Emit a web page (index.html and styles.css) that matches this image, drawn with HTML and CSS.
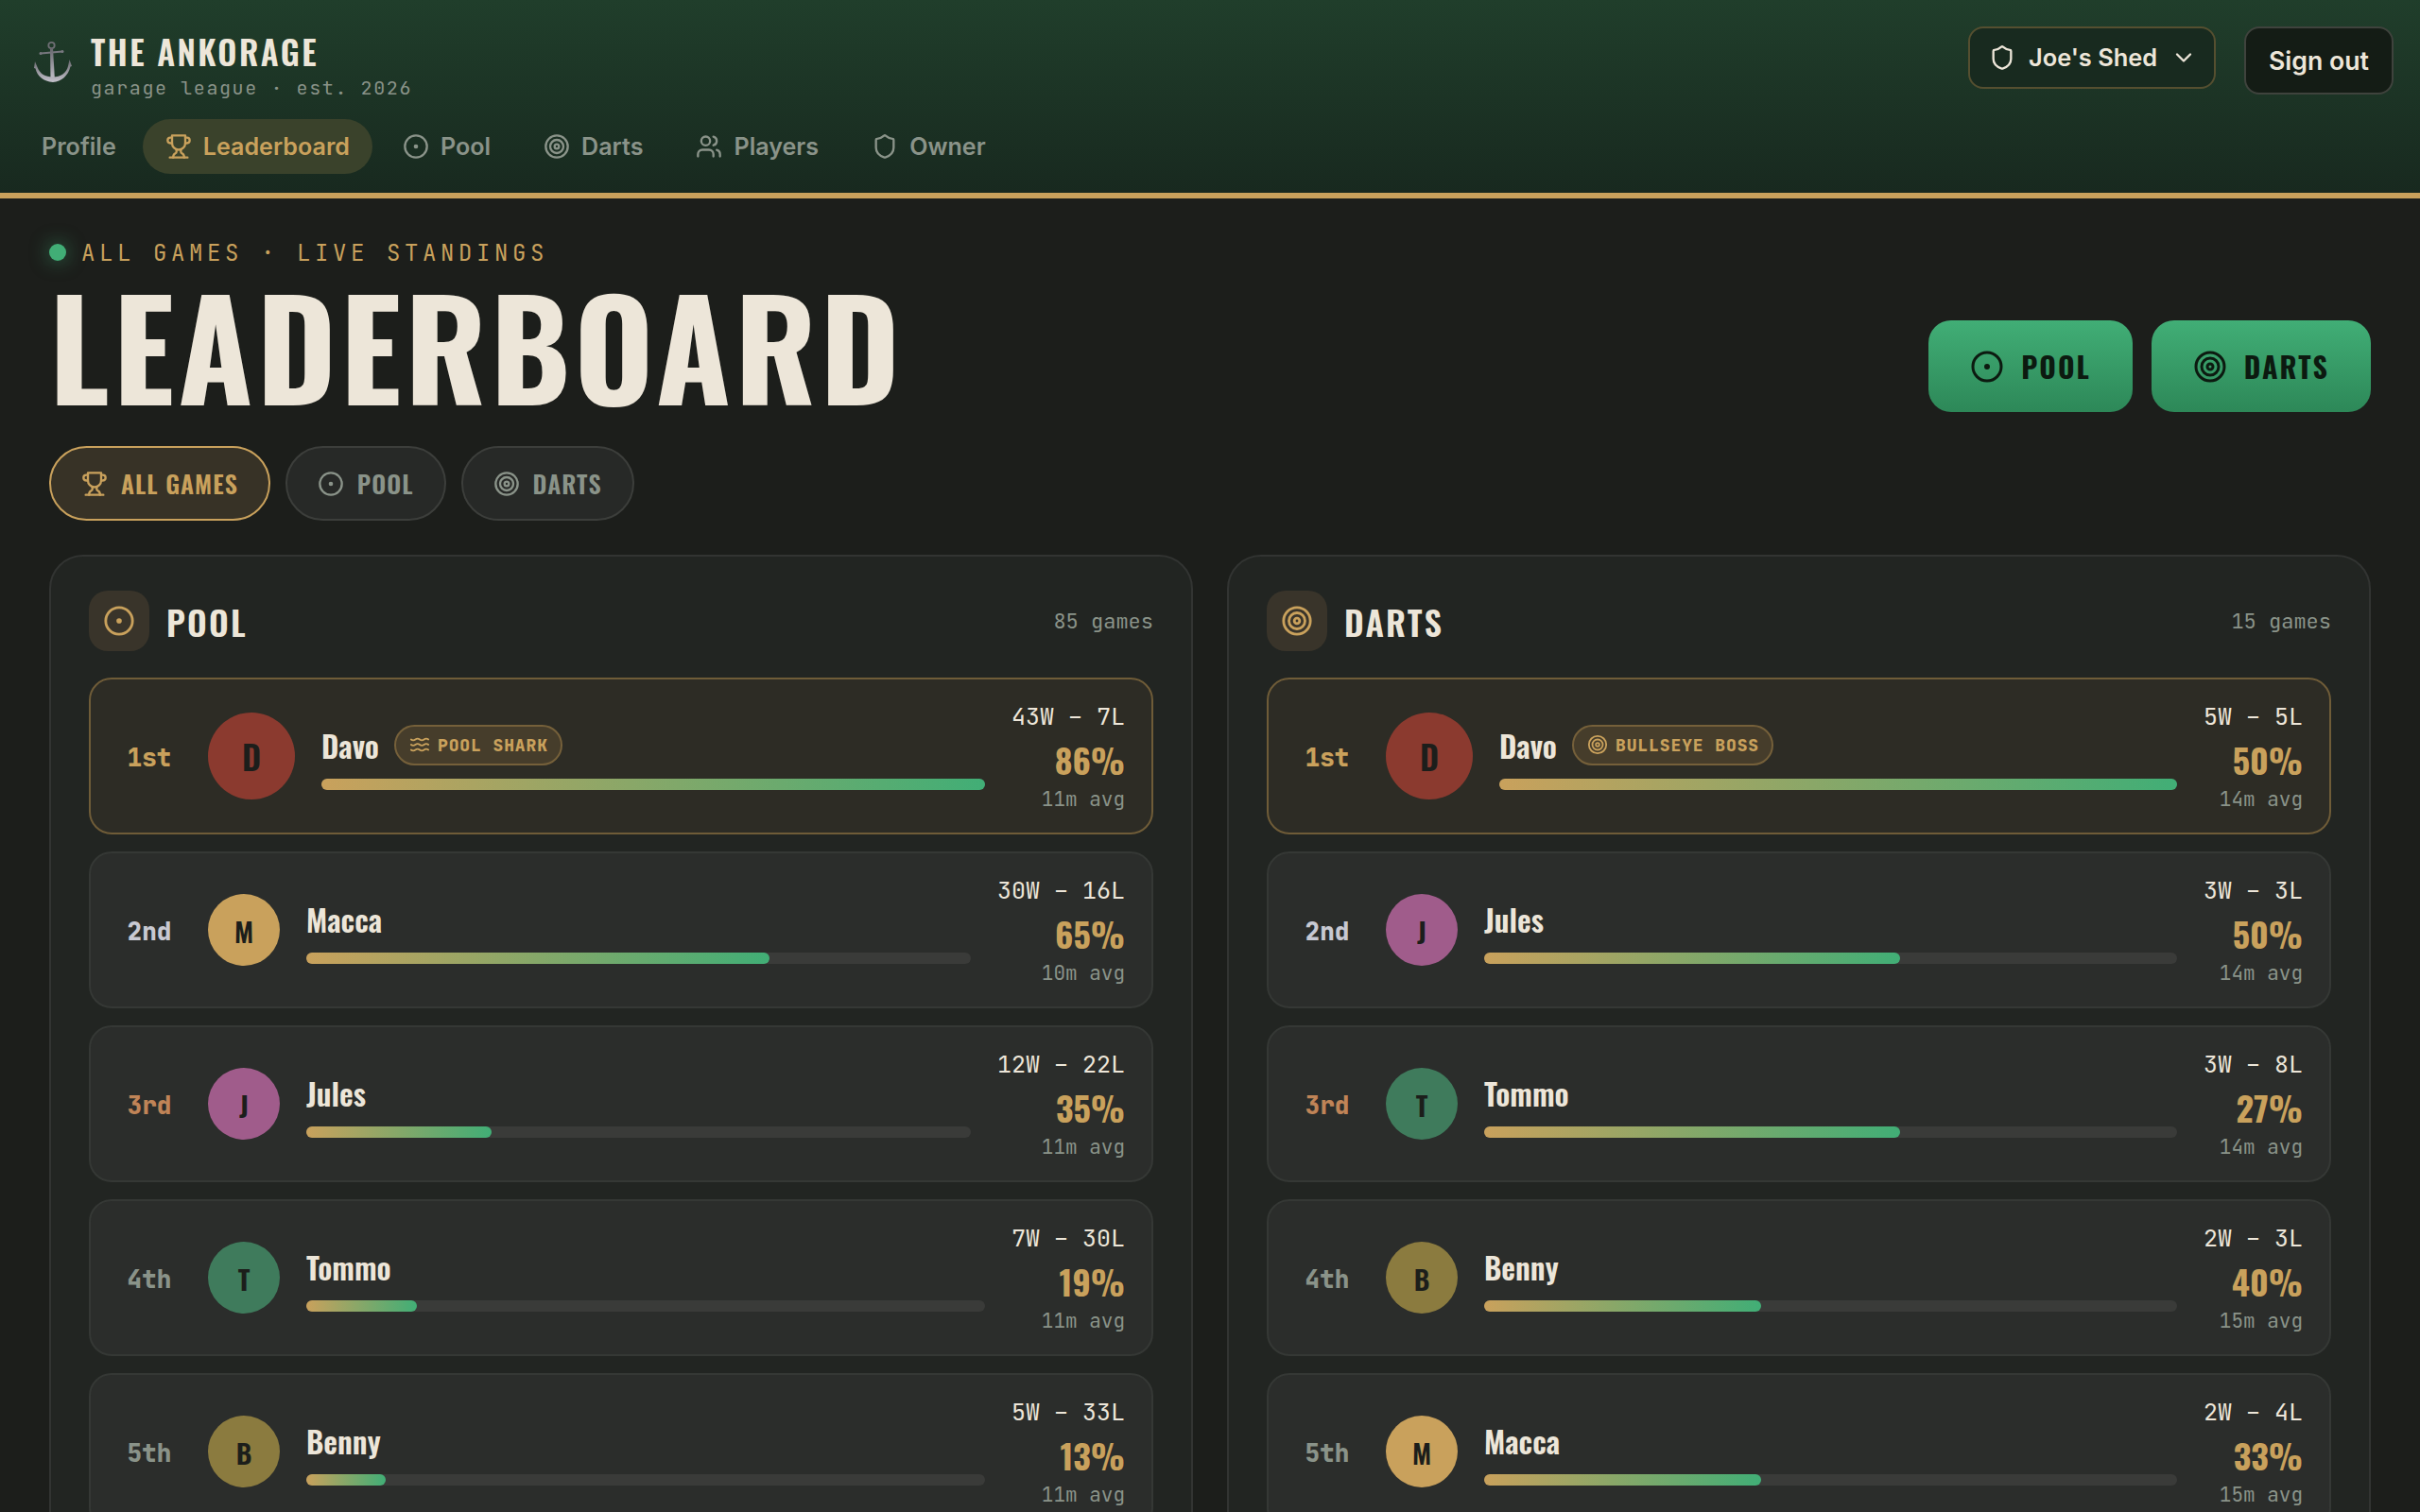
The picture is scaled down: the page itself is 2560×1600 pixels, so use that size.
FILE: index.html
```html
<!DOCTYPE html>
<html lang="en">
<head>
    <meta charset="UTF-8">
    <meta name="viewport" content="width=device-width, initial-scale=1.0">
    <title>The Ankorage - Leaderboard</title>
    <link rel="stylesheet" href="styles.css">
</head>
<body>

<!-- Icon sprite -->
<svg class="sprite">
    <symbol id="trophy" viewBox="0 0 24 24">
        <path d="M6 9H4.5a2.5 2.5 0 0 1 0-5H6"/>
        <path d="M18 9h1.5a2.5 2.5 0 0 0 0-5H18"/>
        <path d="M4 22h16"/>
        <path d="M10 14.66V17c0 .55-.47.98-.97 1.21C7.85 18.75 7 20.24 7 22"/>
        <path d="M14 14.66V17c0 .55.47.98.97 1.21C16.15 18.75 17 20.24 17 22"/>
        <path d="M18 2H6v7a6 6 0 0 0 12 0V2Z"/>
    </symbol>
    <symbol id="pool" viewBox="0 0 24 24">
        <circle cx="12" cy="12" r="10"/>
        <circle cx="12" cy="12" r="1"/>
    </symbol>
    <symbol id="darts" viewBox="0 0 24 24">
        <circle cx="12" cy="12" r="10"/>
        <circle cx="12" cy="12" r="6"/>
        <circle cx="12" cy="12" r="2"/>
    </symbol>
    <symbol id="users" viewBox="0 0 24 24">
        <path d="M16 21v-2a4 4 0 0 0-4-4H6a4 4 0 0 0-4 4v2"/>
        <circle cx="9" cy="7" r="4"/>
        <path d="M22 21v-2a4 4 0 0 0-3-3.87"/>
        <path d="M16 3.13a4 4 0 0 1 0 7.75"/>
    </symbol>
    <symbol id="shield" viewBox="0 0 24 24">
        <path d="M20 13c0 5-3.5 7.5-7.66 8.95a1 1 0 0 1-.67-.01C7.5 20.5 4 18 4 13V6a1 1 0 0 1 1-1c2 0 4.5-1.2 6.24-2.72a1.17 1.17 0 0 1 1.52 0C14.51 3.81 17 5 19 5a1 1 0 0 1 1 1z"/>
    </symbol>
    <symbol id="chevron" viewBox="0 0 24 24">
        <path d="m6 9 6 6 6-6"/>
    </symbol>
    <symbol id="waves" viewBox="0 0 24 24">
        <path d="M2 6c.6.5 1.2 1 2.5 1C7 7 7 5 9.5 5c2.6 0 2.4 2 5 2 2.5 0 2.5-2 5-2 1.3 0 1.9.5 2.5 1"/>
        <path d="M2 12c.6.5 1.2 1 2.5 1 2.5 0 2.5-2 5-2 2.6 0 2.4 2 5 2 2.5 0 2.5-2 5-2 1.3 0 1.9.5 2.5 1"/>
        <path d="M2 18c.6.5 1.2 1 2.5 1 2.5 0 2.5-2 5-2 2.6 0 2.4 2 5 2 2.5 0 2.5-2 5-2 1.3 0 1.9.5 2.5 1"/>
    </symbol>
</svg>

<header class="header">
    <div class="topbar">
        <div class="brand">
            <svg class="anchor" viewBox="0 0 42 46">
                <defs>
                    <linearGradient id="steel" x1="0" y1="0" x2="0" y2="1">
                        <stop offset="0" stop-color="#66666c"/>
                        <stop offset="1" stop-color="#c4c2cb"/>
                    </linearGradient>
                </defs>
                <circle cx="19.5" cy="5" r="3.2" fill="none" stroke="#6f6f75" stroke-width="1.8"/>
                <path d="M8 13.5 L31 11.5" stroke="#77777e" stroke-width="2" stroke-linecap="round"/>
                <circle cx="8" cy="13.5" r="1.5" fill="#77777e"/>
                <circle cx="31" cy="11.5" r="1.5" fill="#77777e"/>
                <path d="M18 8 L21 8 L23 42 L18.5 42 Z" fill="url(#steel)"/>
                <path d="M2 22 L4.5 28 C7 35 13 38.5 21 38.5 C29 38.5 35.5 34 37 27 L38.5 20 L41 27 L39.5 27.5 C37 37.5 30 43 21 44 C11 43 4.5 38 2.5 29.5 L1 29 Z" fill="url(#steel)"/>
            </svg>
            <div class="brand-text">
                <div class="brand-name cond">THE ANKORAGE</div>
                <div class="brand-sub">garage league · est. 2026</div>
            </div>
        </div>
        <div class="account">
            <button class="org"><svg class="icon"><use href="#shield"/></svg><span>Joe's Shed</span><svg class="icon chevron"><use href="#chevron"/></svg></button>
            <button class="signout">Sign out</button>
        </div>
    </div>
    <nav class="nav">
        <a class="nav-item plain">Profile</a>
        <a class="nav-item active"><svg class="icon"><use href="#trophy"/></svg>Leaderboard</a>
        <a class="nav-item"><svg class="icon"><use href="#pool"/></svg>Pool</a>
        <a class="nav-item"><svg class="icon"><use href="#darts"/></svg>Darts</a>
        <a class="nav-item"><svg class="icon"><use href="#users"/></svg>Players</a>
        <a class="nav-item"><svg class="icon"><use href="#shield"/></svg>Owner</a>
    </nav>
</header>

<main class="main">
    <div class="hero">
        <div>
            <div class="eyebrow"><span class="dot"></span>ALL GAMES · LIVE STANDINGS</div>
            <h1 class="title cond">LEADERBOARD</h1>
        </div>
        <div class="actions">
            <button class="action"><svg class="icon"><use href="#pool"/></svg><span class="cond">POOL</span></button>
            <button class="action"><svg class="icon"><use href="#darts"/></svg><span class="cond">DARTS</span></button>
        </div>
    </div>

    <div class="tabs">
        <button class="tab active"><svg class="icon"><use href="#trophy"/></svg><span class="cond">ALL GAMES</span></button>
        <button class="tab"><svg class="icon"><use href="#pool"/></svg><span class="cond">POOL</span></button>
        <button class="tab"><svg class="icon"><use href="#darts"/></svg><span class="cond">DARTS</span></button>
    </div>

    <div class="boards">
        <section class="board">
            <div class="board-head">
                <span class="board-icon"><svg class="icon"><use href="#pool"/></svg></span>
                <h2 class="board-title cond">POOL</h2>
                <span class="board-count">85 games</span>
            </div>
            <div class="row first">
                <div class="rank">1st</div>
                <div class="avatar red"><span class="cond">D</span></div>
                <div class="player">
                    <div class="name-line"><span class="name cond">Davo</span><span class="badge"><svg class="icon"><use href="#waves"/></svg>POOL SHARK</span></div>
                    <div class="bar"><div class="fill" style="width: 100%"></div></div>
                </div>
                <div class="stats"><div class="record">43W – 7L</div><div class="pct cond">86%</div><div class="avg">11m avg</div></div>
            </div>
            <div class="row second">
                <div class="rank">2nd</div>
                <div class="avatar gold"><span class="cond">M</span></div>
                <div class="player">
                    <div class="name-line"><span class="name cond">Macca</span></div>
                    <div class="bar"><div class="fill" style="width: 69.77%"></div></div>
                </div>
                <div class="stats"><div class="record">30W – 16L</div><div class="pct cond">65%</div><div class="avg">10m avg</div></div>
            </div>
            <div class="row third">
                <div class="rank">3rd</div>
                <div class="avatar purple"><span class="cond">J</span></div>
                <div class="player">
                    <div class="name-line"><span class="name cond">Jules</span></div>
                    <div class="bar"><div class="fill" style="width: 27.91%"></div></div>
                </div>
                <div class="stats"><div class="record">12W – 22L</div><div class="pct cond">35%</div><div class="avg">11m avg</div></div>
            </div>
            <div class="row">
                <div class="rank">4th</div>
                <div class="avatar green"><span class="cond">T</span></div>
                <div class="player">
                    <div class="name-line"><span class="name cond">Tommo</span></div>
                    <div class="bar"><div class="fill" style="width: 16.28%"></div></div>
                </div>
                <div class="stats"><div class="record">7W – 30L</div><div class="pct cond">19%</div><div class="avg">11m avg</div></div>
            </div>
            <div class="row">
                <div class="rank">5th</div>
                <div class="avatar olive"><span class="cond">B</span></div>
                <div class="player">
                    <div class="name-line"><span class="name cond">Benny</span></div>
                    <div class="bar"><div class="fill" style="width: 11.63%"></div></div>
                </div>
                <div class="stats"><div class="record">5W – 33L</div><div class="pct cond">13%</div><div class="avg">11m avg</div></div>
            </div>
        </section>

        <section class="board">
            <div class="board-head">
                <span class="board-icon"><svg class="icon"><use href="#darts"/></svg></span>
                <h2 class="board-title cond">DARTS</h2>
                <span class="board-count">15 games</span>
            </div>
            <div class="row first">
                <div class="rank">1st</div>
                <div class="avatar red"><span class="cond">D</span></div>
                <div class="player">
                    <div class="name-line"><span class="name cond">Davo</span><span class="badge"><svg class="icon"><use href="#darts"/></svg>BULLSEYE BOSS</span></div>
                    <div class="bar"><div class="fill" style="width: 100%"></div></div>
                </div>
                <div class="stats"><div class="record">5W – 5L</div><div class="pct cond">50%</div><div class="avg">14m avg</div></div>
            </div>
            <div class="row second">
                <div class="rank">2nd</div>
                <div class="avatar purple"><span class="cond">J</span></div>
                <div class="player">
                    <div class="name-line"><span class="name cond">Jules</span></div>
                    <div class="bar"><div class="fill" style="width: 60%"></div></div>
                </div>
                <div class="stats"><div class="record">3W – 3L</div><div class="pct cond">50%</div><div class="avg">14m avg</div></div>
            </div>
            <div class="row third">
                <div class="rank">3rd</div>
                <div class="avatar green"><span class="cond">T</span></div>
                <div class="player">
                    <div class="name-line"><span class="name cond">Tommo</span></div>
                    <div class="bar"><div class="fill" style="width: 60%"></div></div>
                </div>
                <div class="stats"><div class="record">3W – 8L</div><div class="pct cond">27%</div><div class="avg">14m avg</div></div>
            </div>
            <div class="row">
                <div class="rank">4th</div>
                <div class="avatar olive"><span class="cond">B</span></div>
                <div class="player">
                    <div class="name-line"><span class="name cond">Benny</span></div>
                    <div class="bar"><div class="fill" style="width: 40%"></div></div>
                </div>
                <div class="stats"><div class="record">2W – 3L</div><div class="pct cond">40%</div><div class="avg">15m avg</div></div>
            </div>
            <div class="row">
                <div class="rank">5th</div>
                <div class="avatar gold"><span class="cond">M</span></div>
                <div class="player">
                    <div class="name-line"><span class="name cond">Macca</span></div>
                    <div class="bar"><div class="fill" style="width: 40%"></div></div>
                </div>
                <div class="stats"><div class="record">2W – 4L</div><div class="pct cond">33%</div><div class="avg">15m avg</div></div>
            </div>
        </section>
    </div>
</main>

</body>
</html>
```
FILE: styles.css
```css
:root {
    --bg: #1c1e1b;
    --cream: #ede6d9;
    --muted: #8a9389;
    --gold: #c9a15c;
    --green: #41ae76;
    --mono: "JetBrains Mono", "DejaVu Sans Mono", monospace;
    --sans: Inter, sans-serif;
    --display: Oswald, "Liberation Sans Narrow", sans-serif;
}
* {
    box-sizing: border-box;
}
body {
    margin: 0;
    height: 1600px;
    overflow: hidden;
    background: var(--bg);
    color: var(--cream);
    font-family: var(--sans);
}
button {
    font-family: inherit;
    color: inherit;
    border: none;
    white-space: nowrap;
}
.sprite {
    display: none;
}
.icon {
    width: 28px;
    height: 28px;
    flex: none;
    fill: none;
    stroke: currentColor;
    stroke-width: 2;
    stroke-linecap: round;
    stroke-linejoin: round;
}
.cond {
    font-family: var(--display);
    font-weight: 600;
}

/* Header */
.header {
    height: 210px;
    padding: 28px 28px 0 20px;
    border-bottom: 6px solid var(--gold);
    background: linear-gradient(#203e2b, #18291f);
}
.topbar {
    display: flex;
    justify-content: space-between;
    align-items: flex-start;
    height: 98px;
}
.brand {
    display: flex;
    padding-left: 15px;
}
.anchor {
    width: 42px;
    height: 46px;
    margin-top: 15px;
    margin-right: 19px;
}
.brand-name {
    font-size: 35px;
    line-height: 40px;
    letter-spacing: 2.45px;
    margin-top: 6px;
}
.brand-sub {
    font-family: var(--mono);
    font-size: 20px;
    line-height: 24px;
    letter-spacing: 1.6px;
    color: var(--muted);
    margin-top: 7px;
}
.account {
    display: flex;
    align-items: flex-start;
    gap: 30px;
}
.org {
    display: flex;
    align-items: center;
    width: 262px;
    height: 66px;
    padding: 0 22px 1px 20px;
    border: 2px solid #554f30;
    border-radius: 16px;
    background: #182a1f;
    font-size: 25.4px;
    font-weight: 600;
}
.org span {
    margin: 0 14px;
}
.org .chevron {
    margin-left: auto;
}
.signout {
    width: 158px;
    height: 72px;
    padding: 0;
    border: 2px solid #3f433d;
    border-radius: 16px;
    background: #141c15;
    font-size: 26.67px;
    font-weight: 600;
}
.nav {
    display: flex;
    gap: 8px;
}
.nav-item {
    display: flex;
    align-items: center;
    gap: 12px;
    height: 58px;
    padding: 0 24px;
    border-radius: 29px;
    color: var(--muted);
    font-size: 25.1px;
    font-weight: 600;
}
.nav-item.plain {
    padding: 0 20px 0 24px;
}
.nav-item.active {
    color: var(--gold);
    background: #3a422b;
}

/* Hero */
.main {
    padding: 42px 52px 0;
}
.hero {
    display: flex;
    justify-content: space-between;
    align-items: flex-end;
    height: 184px;
}
.eyebrow {
    display: flex;
    align-items: center;
    gap: 16px;
    height: 30px;
    font-family: var(--mono);
    font-size: 24px;
    letter-spacing: 4.6px;
    color: var(--gold);
}
.dot {
    width: 18px;
    height: 18px;
    border-radius: 50%;
    background: var(--green);
    box-shadow: 0 0 20px rgba(66, 176, 120, 0.6);
}
.title {
    margin: 15px 0 5px;
    font-size: 144px;
    font-weight: 700;
    line-height: 134px;
    letter-spacing: 4px;
}
.actions {
    display: flex;
    gap: 20px;
}
.action {
    display: flex;
    align-items: center;
    gap: 18px;
    height: 97px;
    padding: 0 44px;
    border-radius: 24px;
    background: linear-gradient(#41ae76, #2d8858);
    color: #0c1a10;
    font-size: 30px;
    letter-spacing: 2px;
}
.action .cond {
    font-weight: 700;
}
.action .icon {
    width: 36px;
    height: 36px;
}
.tabs {
    display: flex;
    gap: 16px;
    margin-top: 36px;
}
.tab {
    display: flex;
    align-items: center;
    gap: 14px;
    height: 79px;
    padding: 0 32px;
    border: 2px solid #3c3e3b;
    border-radius: 40px;
    background: #272927;
    color: var(--muted);
    font-size: 26px;
    letter-spacing: 1.04px;
}
.tab.active {
    border-color: var(--gold);
    background: #373226;
    color: var(--gold);
}

/* Boards */
.boards {
    display: grid;
    grid-template-columns: 1fr 1fr;
    gap: 36px;
    margin-top: 36px;
}
.board {
    padding: 36px 40px 40px;
    border: 2px solid #323432;
    border-radius: 36px;
    background: #222522;
}
.board-head {
    display: flex;
    align-items: center;
    height: 64px;
    margin-bottom: 28px;
}
.board-icon {
    display: flex;
    align-items: center;
    justify-content: center;
    width: 64px;
    height: 64px;
    border-radius: 20px;
    background: #39342a;
    color: var(--gold);
}
.board-icon .icon {
    width: 34px;
    height: 34px;
}
.board-title {
    margin: 0 0 0 18px;
    font-size: 36px;
    letter-spacing: 2.2px;
}
.board-count {
    margin-left: auto;
    font-family: var(--mono);
    font-size: 22px;
    color: var(--muted);
}
.row {
    display: flex;
    align-items: center;
    gap: 28px;
    height: 166px;
    margin-bottom: 18px;
    padding: 0 28px;
    border: 2px solid #353835;
    border-radius: 24px;
    background: #2b2d2b;
}
.row.first {
    border-color: #6f5c38;
    background: #2d2c25;
}
.rank {
    width: 68px;
    padding-top: 2px;
    text-align: center;
    font-family: var(--mono);
    font-size: 26px;
    font-weight: 800;
    color: var(--muted);
}
.first .rank {
    color: var(--gold);
}
.second .rank {
    color: #c8c9d2;
}
.third .rank {
    color: #c08457;
}
.avatar {
    display: flex;
    align-items: center;
    justify-content: center;
    width: 76px;
    height: 76px;
    border-radius: 50%;
    color: #1c1e1b;
    font-size: 29px;
}
.first .avatar {
    width: 92px;
    height: 92px;
    font-size: 35px;
}
.red {
    background: #8b3a2f;
}
.gold {
    background: #c9a15c;
}
.purple {
    background: #a05c8b;
}
.green {
    background: #3f7b5c;
}
.olive {
    background: #8b7b3f;
}
.player {
    flex: 1;
    padding-top: 2px;
}
.name-line {
    display: flex;
    align-items: center;
    gap: 16px;
    height: 43px;
    margin-bottom: 14px;
}
.name {
    font-size: 32px;
}
.badge {
    display: flex;
    align-items: center;
    gap: 8px;
    height: 43px;
    padding: 0 13px 0 14px;
    border: 2px solid #75603a;
    border-radius: 22px;
    background: #463d2b;
    color: var(--gold);
    font-family: var(--mono);
    font-size: 18px;
    font-weight: 800;
    letter-spacing: 0.9px;
}
.badge .icon {
    width: 22px;
    height: 22px;
}
.bar {
    height: 12px;
    border-radius: 6px;
    background: #3a3b39;
}
.fill {
    height: 12px;
    border-radius: 6px;
    background: linear-gradient(90deg, #c9a15c, #41ae76);
}
.stats {
    text-align: right;
}
.record {
    font-family: var(--mono);
    font-size: 25px;
    line-height: 32px;
    padding-top: 1px;
}
.pct {
    font-size: 36px;
    font-weight: 700;
    line-height: 44px;
    margin: 8px 0 6px;
    color: var(--gold);
}
.avg {
    font-family: var(--mono);
    font-size: 21px;
    line-height: 28px;
    color: var(--muted);
}
```
